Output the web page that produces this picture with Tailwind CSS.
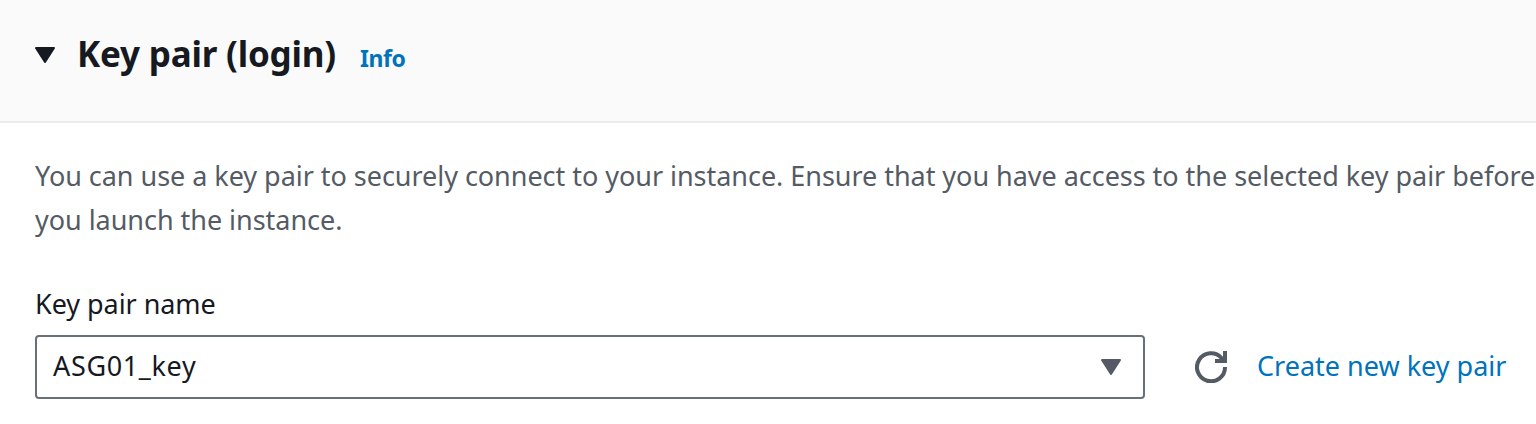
<!DOCTYPE html>
<html lang="en">
<head>
<meta charset="utf-8">
<title>Key pair (login)</title>
<script src="https://cdn.jsdelivr.net/npm/@tailwindcss/browser@4"></script>
</head>
<body class="w-[1536px] h-[424px] overflow-hidden bg-white font-['Noto_Sans',sans-serif] text-[27px] text-[#16191f]">
<header class="flex h-[123px] items-start border-b-2 border-[#eaeded] bg-[#fafafa] pl-[35px]">
  <svg class="mt-[47px] h-4 w-5 shrink-0" viewBox="0 0 20 16" fill="#16191f" stroke="#16191f" stroke-width="2" stroke-linejoin="round"><path d="M1 1h18l-9 14z"/></svg>
  <h2 class="ml-[22px] mt-[30px] w-[260px] whitespace-nowrap text-[35px] font-bold leading-[48px] tracking-[-0.2px]">Key pair (login)</h2>
  <a class="ml-[23px] mt-[42px] text-[23px] font-bold leading-8 tracking-[-0.4px] text-[#0073bb]">Info</a>
</header>
<main class="px-[35px]">
  <p class="mt-[31px] whitespace-nowrap leading-[44px] tracking-[-0.035px] text-[#545b64]">You can use a key pair to securely connect to your instance. Ensure that you have access to the selected key pair before<br>you launch the instance.</p>
  <label class="mt-[40px] block leading-[44px] tracking-[-0.05px]">Key pair name</label>
  <div class="mt-[9px] flex items-center">
    <div class="flex h-16 w-[1110px] shrink-0 items-center justify-between rounded-[4px] border-2 border-[#687078] pl-4 pr-[22px]">
      <span class="-mt-0.5 tracking-[0.65px]">ASG01_key</span>
      <svg class="h-4 w-5" viewBox="0 0 20 16" fill="#545b64" stroke="#545b64" stroke-width="2" stroke-linejoin="round"><path d="M1 1h18l-9 14z"/></svg>
    </div>
    <svg class="ml-[50px] h-8 w-8 shrink-0" viewBox="0 0 32 32" fill="none" stroke="#545b64" stroke-width="4"><path d="M30 16A14 14 0 1 1 26.5 7L29 10M30 0v10H20"/></svg>
    <a class="-mt-0.5 ml-[30px] whitespace-nowrap text-[#0073bb]">Create new key pair</a>
  </div>
</main>
</body>
</html>
